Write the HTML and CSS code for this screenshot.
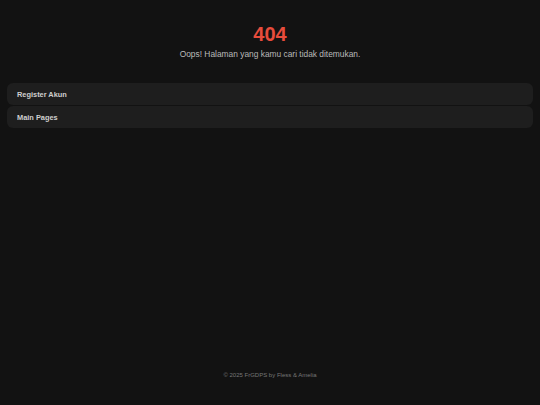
FILE: index.html
```html
<!DOCTYPE html>
<html lang="id">
<head>
<meta charset="utf-8">
<title>404</title>
<link rel="stylesheet" href="styles.css">
</head>
<body>
<div class="page">
  <header class="hero">
    <h1 class="code">404</h1>
    <p class="msg">Oops! Halaman yang kamu cari tidak ditemukan.</p>
  </header>
  <nav class="links">
    <a class="card" href="#">Register Akun</a>
    <a class="card" href="#">Main Pages</a>
  </nav>
  <footer class="foot">© 2025 FrGDPS by Fless &amp; Amelia</footer>
</div>
</body>
</html>
```
FILE: styles.css
```css
html, body {
  margin: 0;
  padding: 0;
  background: #121212;
}
body {
  font-family: "Liberation Sans", Arial, sans-serif;
  color: #ddd;
}
.page {
  min-height: 405px;
  box-sizing: border-box;
  padding: 0 7px;
  display: flex;
  flex-direction: column;
}
.hero {
  text-align: center;
  padding-top: 24px;
}
.code {
  margin: 0;
  font-size: 20px;
  line-height: 20px;
  font-weight: bold;
  color: #e74c3c;
}
.msg {
  margin: 4px 0 0;
  font-size: 8.4px;
  line-height: 12px;
  color: #bbb;
}
.links {
  margin-top: 23px;
  display: flex;
  flex-direction: column;
  gap: 1px;
}
.card {
  display: flex;
  align-items: center;
  height: 22px;
  padding: 0 10px;
  background: #1e1e1e;
  border-radius: 6px;
  color: #cfcfcf;
  font-size: 7.4px;
  font-weight: bold;
  text-decoration: none;
}
.foot {
  margin-top: auto;
  padding-bottom: 27px;
  text-align: center;
  font-size: 6px;
  color: #777;
}
```
